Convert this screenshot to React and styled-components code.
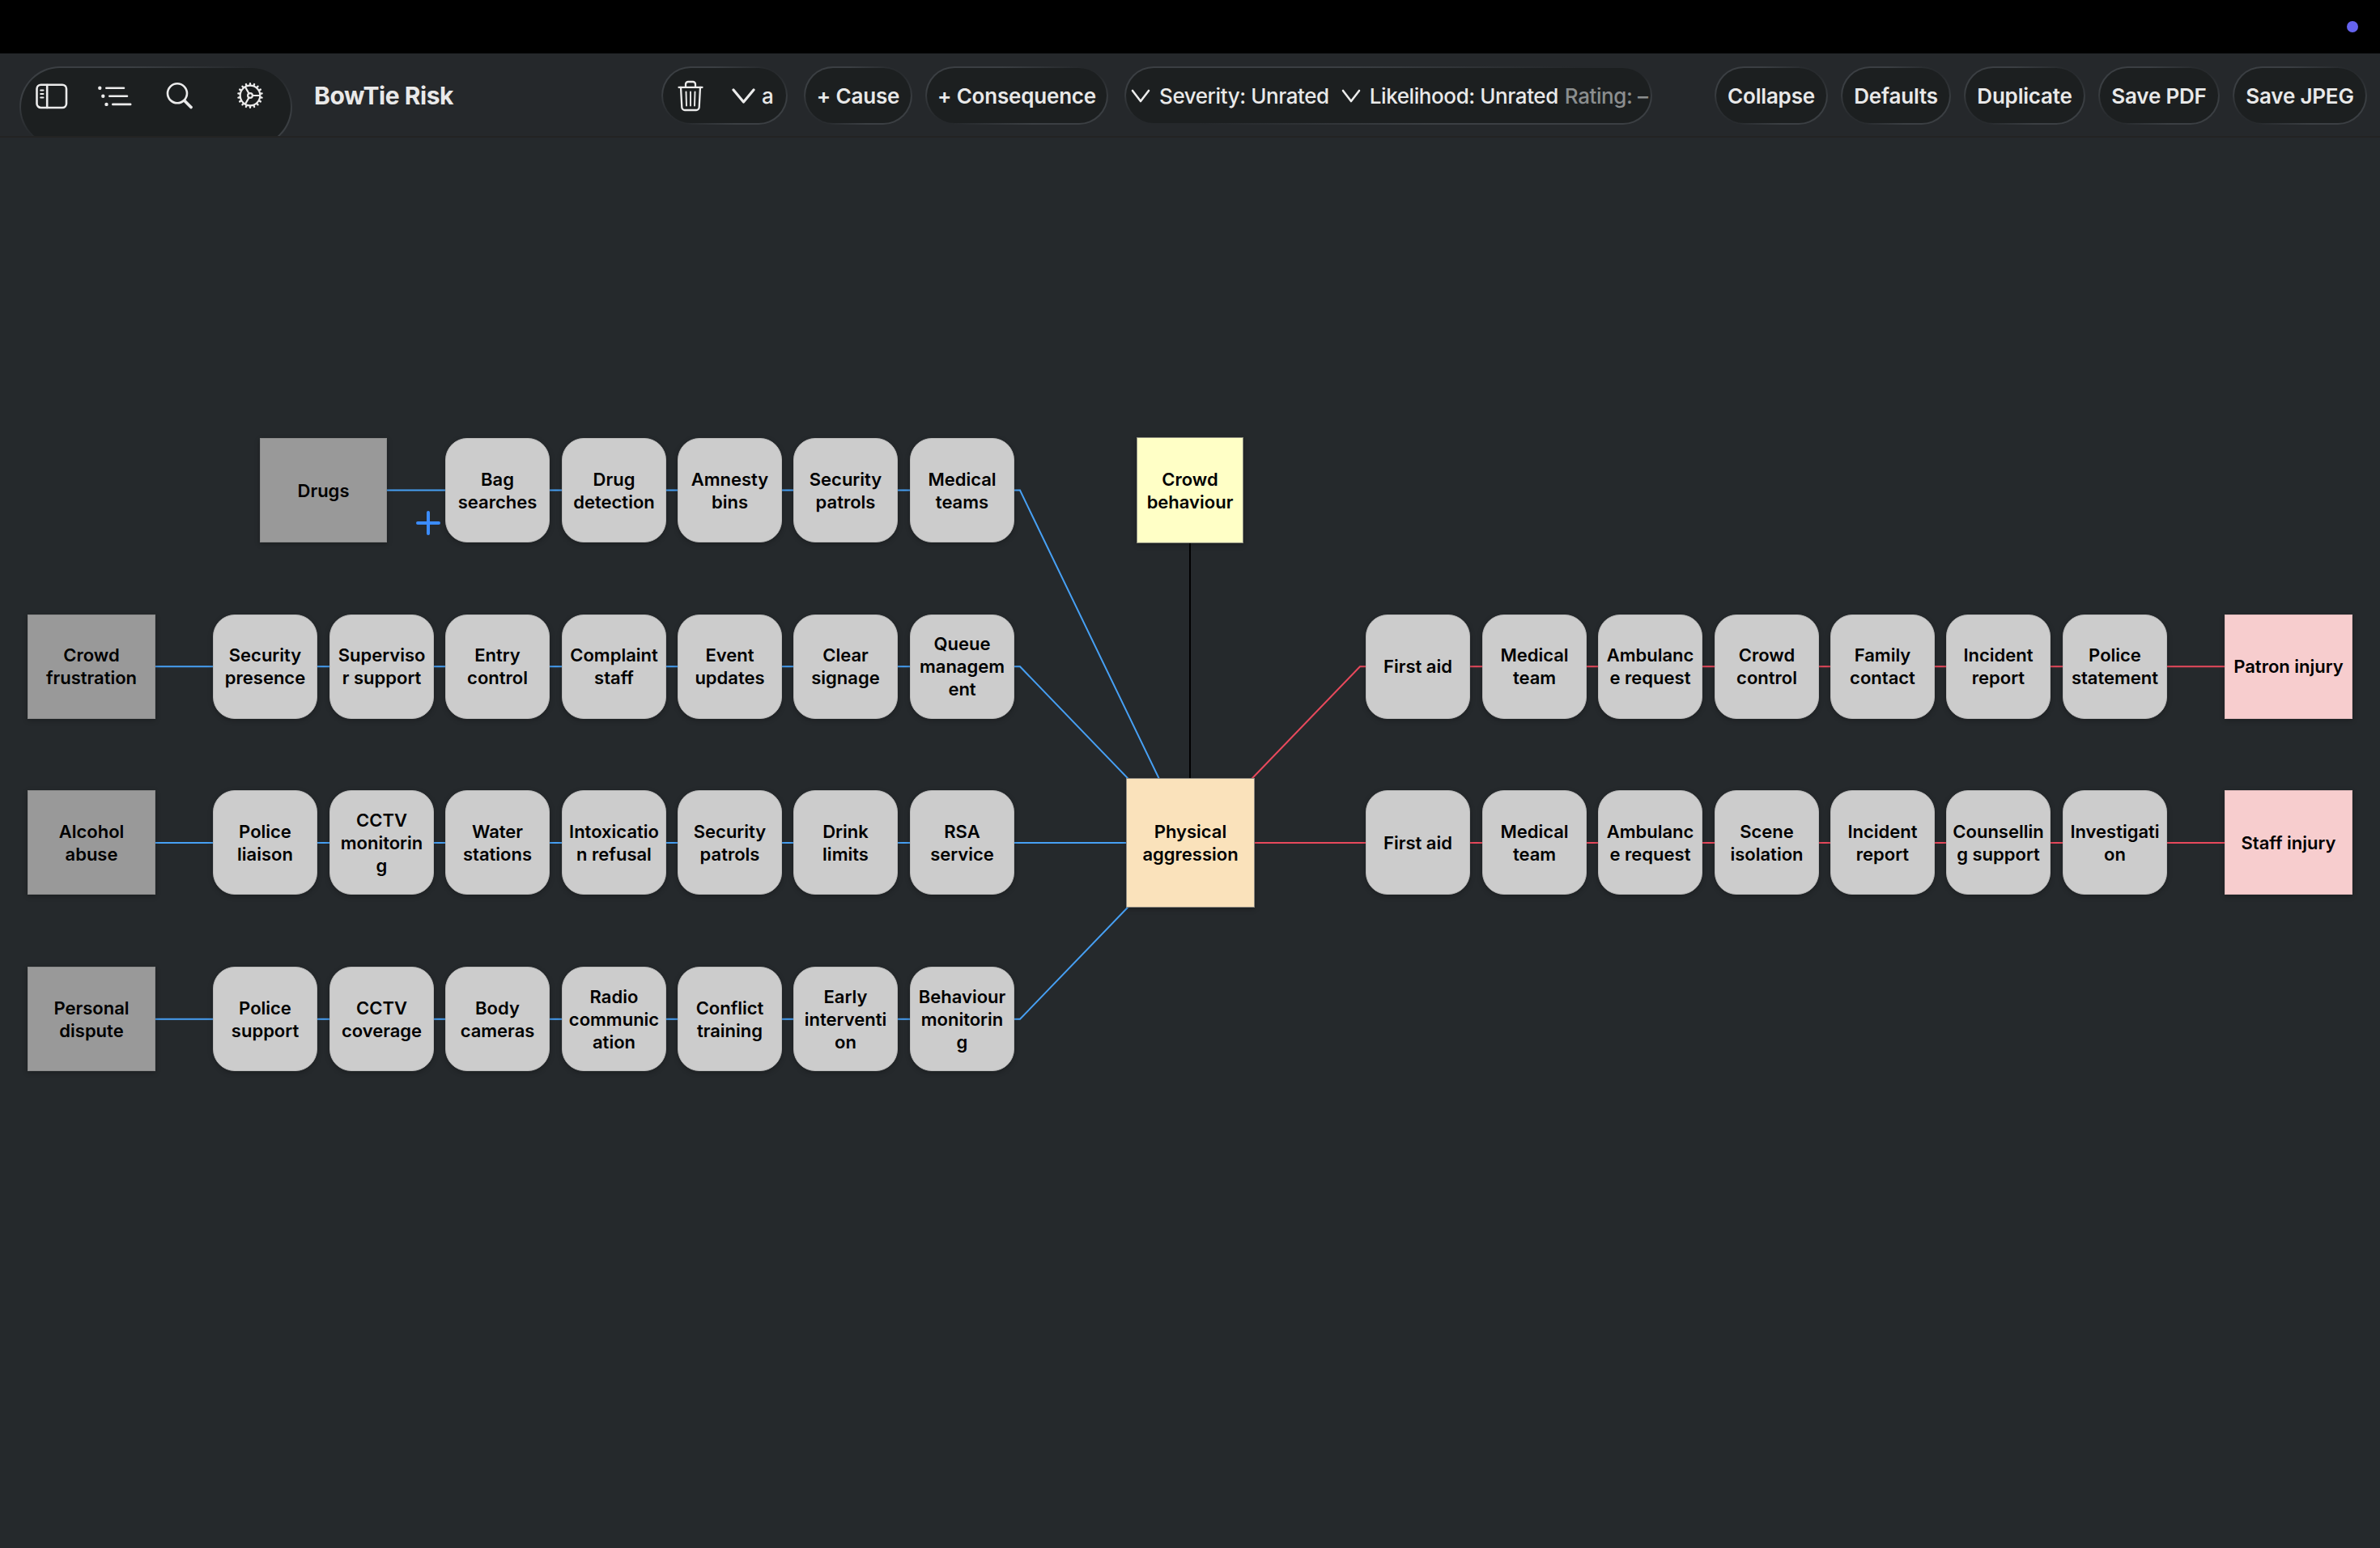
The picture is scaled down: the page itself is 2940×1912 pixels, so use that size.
import React from 'react'
import styled, { createGlobalStyle } from 'styled-components'

const GlobalStyle=createGlobalStyle`
*{
  box-sizing:border-box;
}
body{
  margin:0;
  background:#25292c;
  font-family:Inter,"Liberation Sans",sans-serif;
}
`
const Page=styled.div`
width:2940px;
height:1912px;
display:flex;
flex-direction:column;
overflow:hidden;
background:#25292c;
`
const MenuBar=styled.div`
height:66px;
flex:none;
display:flex;
justify-content:flex-end;
align-items:center;
padding-right:27px;
background:#000;
`
const RecordingDot=styled.span`
width:14px;
height:14px;
border-radius:50%;
background:#6563ef;
`
const Toolbar=styled.header`
height:104px;
flex:none;
display:flex;
align-items:flex-start;
padding:16px 16px 0 24px;
overflow:hidden;
background:#25282b;
border-bottom:2px solid #232323;
`
const Pill=styled.div`
width:${({$width})=>$width}px;
height:${({$tall})=>$tall?100:72}px;
margin-left:${({$gap})=>$gap||0}px;
flex:none;
display:flex;
align-items:center;
justify-content:center;
overflow:hidden;
white-space:nowrap;
border:2px solid transparent;
border-radius:50px;
background:
  linear-gradient(#1c1f20,#1c1f20) padding-box,
  linear-gradient(to top right,#25282b 8%,#3b3f43 30%,#3b3f43 70%,#25282b 92%) border-box;
color:#e9e9e9;
font-size:26px;
font-weight:600;
letter-spacing:-0.2px;
`
const IconPill=styled(Pill)`
align-items:flex-start;
justify-content:flex-start;
padding:16px 0 0 18px;
`
const EditPill=styled(Pill)`
justify-content:flex-start;
padding-left:17px;
font-weight:500;
`
const RatingPill=styled(Pill)`
justify-content:flex-start;
padding-left:4px;
font-weight:500;
letter-spacing:-0.42px;
`
const Title=styled.h1`
width:430px;
margin:0 0 0 27px;
line-height:72px;
font-size:30px;
font-weight:700;
letter-spacing:-0.45px;
color:#e9e9e9;
`
const Label=styled.span`
margin-left:${({$left})=>$left||0}px;
`
const MutedLabel=styled(Label)`
color:#8b8e8f;
`
const Icon=styled.svg`
flex:none;
margin-left:${({$left})=>$left||0}px;
fill:none;
stroke:#ebebeb;
stroke-width:${({$stroke})=>$stroke||2.6};
stroke-linecap:round;
stroke-linejoin:round;
`
const Canvas=styled.main`
position:relative;
flex:1;
`
const Links=styled.svg`
position:absolute;
inset:0;
width:100%;
height:100%;
fill:none;
stroke-width:2;
`
const Node=styled.div`
position:absolute;
left:${({$x})=>$x}px;
top:${({$y})=>$y}px;
width:${({$w})=>$w||129}px;
height:${({$h})=>$h||129}px;
padding-bottom:${({$lift})=>$lift?1:0}px;
display:flex;
align-items:center;
justify-content:center;
text-align:center;
white-space:pre;
font-size:22px;
font-weight:560;
line-height:28px;
color:#000;
box-shadow:0 2px 6px rgba(0,0,0,0.25);
`
const Cause=styled(Node)`
background:#999;
border:1px solid #8c8c8c;
`
const Barrier=styled(Node)`
background:#ccc;
border:1px solid #b9b9b9;
border-radius:27px;
`
const Consequence=styled(Node)`
background:#f7cdce;
border:1px solid #e2bcbd;
`
const Hazard=styled(Node)`
background:#ffffc6;
border:1px solid #8e8f80;
`
const TopEvent=styled(Node)`
background:#fae2bb;
border:1px solid #8f8a82;
`

// canvas starts below the menu bar and the toolbar
const TOP=170
const STEP=143.4
const ROWS=[541,759,976,1194]
const LINES=[605.6,823.3,1041,1258.8]

const causes=[
  {row:0,name:'Drugs',x:321,w:157,barriers:['Bag\nsearches','Drug\ndetection','Amnesty\nbins','Security\npatrols','Medical\nteams']},
  {row:1,name:'Crowd\nfrustration',x:34,w:158,barriers:['Security\npresence','Superviso\nr support','Entry\ncontrol','Complaint\nstaff','Event\nupdates','Clear\nsignage','Queue\nmanagem\nent']},
  {row:2,name:'Alcohol\nabuse',x:34,w:158,barriers:['Police\nliaison','CCTV\nmonitorin\ng','Water\nstations','Intoxicatio\nn refusal','Security\npatrols','Drink\nlimits','RSA\nservice']},
  {row:3,name:'Personal\ndispute',x:34,w:158,barriers:['Police\nsupport','CCTV\ncoverage','Body\ncameras','Radio\ncommunic\nation','Conflict\ntraining','Early\ninterventi\non','Behaviour\nmonitorin\ng']},
]
const consequences=[
  {row:1,name:'Patron injury',barriers:['First aid','Medical\nteam','Ambulanc\ne request','Crowd\ncontrol','Family\ncontact','Incident\nreport','Police\nstatement']},
  {row:2,name:'Staff injury',barriers:['First aid','Medical\nteam','Ambulanc\ne request','Scene\nisolation','Incident\nreport','Counsellin\ng support','Investigati\non']},
]
const actions=[
  {name:'Collapse',width:140},
  {name:'Defaults',width:136},
  {name:'Duplicate',width:150},
  {name:'Save PDF',width:150},
  {name:'Save JPEG',width:166},
]

const teeth=Array.from({length:18},(_,i)=>{
  const a=(i*20+10)*Math.PI/180
  return `M${18+13*Math.cos(a)} ${18+13*Math.sin(a)}L${18+14.8*Math.cos(a)} ${18+14.8*Math.sin(a)}`
}).join('')

const SidebarIcon=()=>(
  <Icon width="40" height="40" viewBox="0 0 40 40">
    <rect x="1.5" y="4.7" width="36.5" height="28.3" rx="5"/>
    <path d="M14.2 5V33"/>
    <path strokeWidth="2" d="M6.2 11.5H9.5M6.2 16H9.5M6.2 20.5H9.5"/>
  </Icon>
)
const OutlineIcon=()=>(
  <Icon width="44" height="40" viewBox="0 0 44 40" $left={36}>
    <path strokeWidth="4.4" d="M3.3 8.7H3.31M7.3 18.7H7.31M11.5 28.9H11.51"/>
    <path d="M11.3 8.7H33M15.3 18.7H37M19.3 28.9H41.2"/>
  </Icon>
)
const SearchIcon=()=>(
  <Icon width="40" height="40" viewBox="0 0 40 40" $left={39}>
    <circle cx="16" cy="15.3" r="12"/>
    <path strokeWidth="3.8" d="M25 24.5L33 32.5"/>
  </Icon>
)
const GearIcon=()=>(
  <Icon width="36" height="36" viewBox="0 0 36 36" $left={48} $stroke={2.2}>
    <circle cx="18" cy="18" r="12.3"/>
    <circle cx="18" cy="18" r="2.9"/>
    <path strokeWidth="2.4" d={teeth}/>
    <path d="M21 18H30M16.5 15.4L11.8 7.3M16.5 20.6L11.8 28.7"/>
  </Icon>
)
const TrashIcon=()=>(
  <Icon width="34" height="40" viewBox="0 0 34 40" $stroke={2.3}>
    <path d="M2.5 9.8H31.5"/>
    <path d="M11 9.5V6A3 3 0 0 1 14 3H20A3 3 0 0 1 23 6V9.5"/>
    <path d="M5 9.8L6.3 34.5A3.6 3.6 0 0 0 10 38H24A3.6 3.6 0 0 0 27.7 34.5L29 9.8"/>
    <path strokeWidth="1.9" d="M11.5 15.5L12 32.5M17 15.5V32.5M22.5 15.5L22 32.5"/>
  </Icon>
)
const Chevron=({width,height,left,stroke})=>(
  <Icon width={width} height={height} viewBox={`0 0 ${width} ${height}`} $left={left} $stroke={stroke}>
    <path d={`M2 2L${width/2} ${height-2}L${width-2} 2`}/>
  </Icon>
)

const App = () => {
  return (
    <Page>
      <GlobalStyle/>
      <MenuBar>
        <RecordingDot/>
      </MenuBar>
      <Toolbar>
        <IconPill $width={337} $tall>
          <SidebarIcon/>
          <OutlineIcon/>
          <SearchIcon/>
          <GearIcon/>
        </IconPill>
        <Title>BowTie Risk</Title>
        <EditPill $width={156}>
          <TrashIcon/>
          <Chevron width={29} height={19} left={34} stroke={3.2}/>
          <Label $left={8}>a</Label>
        </EditPill>
        <Pill $width={134} $gap={20}>+ Cause</Pill>
        <Pill $width={226} $gap={16}>+ Consequence</Pill>
        <RatingPill $width={652} $gap={20}>
          <Chevron width={24} height={17} left={2} stroke={2.6}/>
          <Label $left={11}>Severity: Unrated</Label>
          <Chevron width={24} height={17} left={15} stroke={2.6}/>
          <Label $left={11}>Likelihood: Unrated</Label>
          <MutedLabel $left={8}>Rating: –</MutedLabel>
        </RatingPill>
        {actions.map((action,i)=>(
          <Pill key={action.name} $width={action.width} $gap={i?16:77}>{action.name}</Pill>
        ))}
      </Toolbar>
      <Canvas>
        <Links viewBox="0 170 2940 1742">
          <g stroke="#47a0f4">
            {causes.map(({row,x})=>(
              <path key={row} d={`M${x+100} ${LINES[row]}H1260L1470 1041`}/>
            ))}
          </g>
          <g stroke="#e8495c">
            {consequences.map(({row})=>(
              <path key={row} d={`M2800 ${LINES[row]}H1680L1470 1041`}/>
            ))}
          </g>
          <path stroke="#000" d="M1470 600V1041"/>
          <path stroke="#3b8cff" strokeWidth="4" strokeLinecap="round" d="M516 646H542M529 633V659"/>
        </Links>
        {causes.map(({row,name,x,w,barriers})=>(
          <React.Fragment key={name}>
            <Cause $x={x} $y={ROWS[row]-TOP} $w={w} $lift={row===1}>{name}</Cause>
            {barriers.map((text,i)=>(
              <Barrier key={text} $x={Math.round(1123.7-STEP*(barriers.length-1-i))} $y={ROWS[row]-TOP} $lift={row===1}>{text}</Barrier>
            ))}
          </React.Fragment>
        ))}
        <Hazard $x={1404} $y={540-TOP} $w={132} $h={131}>{'Crowd\nbehaviour'}</Hazard>
        <TopEvent $x={1391} $y={961-TOP} $w={159} $h={160}>{'Physical\naggression'}</TopEvent>
        {consequences.map(({row,name,barriers})=>(
          <React.Fragment key={name}>
            {barriers.map((text,i)=>(
              <Barrier key={text} $x={Math.round(1687.3+STEP*i)} $y={ROWS[row]-TOP} $lift={row===1}>{text}</Barrier>
            ))}
            <Consequence $x={2748} $y={ROWS[row]-TOP} $w={158} $lift={row===1}>{name}</Consequence>
          </React.Fragment>
        ))}
      </Canvas>
    </Page>
  )
}

export default App
